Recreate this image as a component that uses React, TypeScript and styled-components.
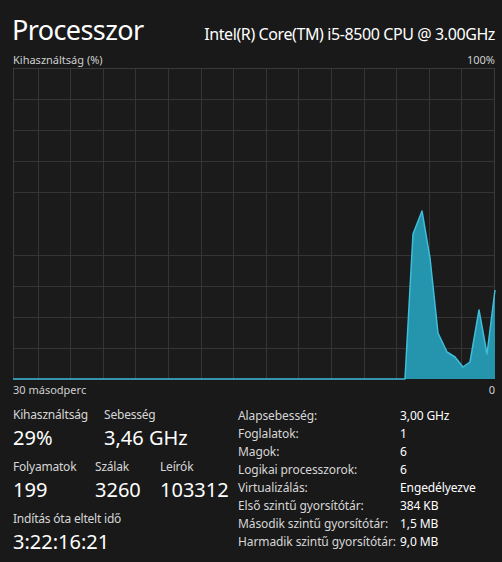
import React from 'react';
import styled, { createGlobalStyle } from 'styled-components';

const GlobalStyle = createGlobalStyle`
  html, body {
    margin: 0;
    padding: 0;
    background: #191919;
  }
  body {
    font-family: 'Noto Sans', 'Open Sans', sans-serif;
    color: #ffffff;
  }
`;

const Page = styled.div`
  width: 502px;
  height: 562px;
  box-sizing: border-box;
  padding: 0 7px 0 13px;
  background: #191919;
  overflow: hidden;
`;

const Header = styled.div`
  display: flex;
  justify-content: space-between;
  align-items: baseline;
  height: 47px;
  padding-top: 14px;
  box-sizing: border-box;
`;

const Title = styled.h1`
  margin: 0 0 0 -1px;
  font-size: 27px;
  font-weight: 400;
  letter-spacing: -0.6px;
  line-height: 32px;
  color: #ffffff;
`;

const CpuName = styled.div`
  font-size: 16px;
  letter-spacing: -0.4px;
  color: #ffffff;
`;

const AxisRow = styled.div<{ $top: number }>`
  display: flex;
  justify-content: space-between;
  box-sizing: border-box;
  padding-top: ${({ $top }) => $top}px;
  font-size: 11px;
  line-height: 14px;
  height: 21px;
  color: #cfcfcf;
`;

const Graph = styled.div`
  position: relative;
  height: 311px;
  box-sizing: border-box;
  border: 1px solid #3a3a3a;
  border-bottom: none;
  background-color: #1b1b1b;
  background-image:
    repeating-linear-gradient(
      to bottom,
      transparent 0,
      transparent 30.1px,
      #353535 30.1px,
      #353535 31.1px
    ),
    repeating-linear-gradient(
      to right,
      transparent 0,
      transparent 31.6px,
      #353535 31.6px,
      #353535 32.6px
    );
  background-position: 0 0, -8px 0;
`;

const Chart = styled.svg`
  position: absolute;
  left: -1px;
  top: -1px;
  width: 482px;
  height: 312px;
  overflow: visible;
`;

const StatsArea = styled.div`
  display: flex;
  padding-top: 7px;
`;

const LeftStats = styled.div`
  display: flex;
  flex-direction: column;
  width: 225px;
`;

const StatRow = styled.div`
  display: flex;
  margin-bottom: 6px;
`;

const StatBlock = styled.div<{ $w?: number }>`
  display: flex;
  flex-direction: column;
  min-width: ${({ $w }) => ($w ? `${$w}px` : 'auto')};
`;

const StatLabel = styled.div`
  font-size: 12px;
  line-height: 16px;
  color: #d6d6d6;
  letter-spacing: -0.2px;
`;

const StatValue = styled.div`
  font-size: 20px;
  line-height: 30px;
  color: #ffffff;
`;

const InfoTable = styled.div`
  display: grid;
  grid-template-columns: 162px auto;
  grid-auto-rows: 17.9px;
  align-items: center;
  font-size: 12px;
  letter-spacing: -0.1px;
  margin-top: 0;
`;

const InfoKey = styled.div`
  color: #d6d6d6;
`;

const InfoVal = styled.div`
  color: #ffffff;
`;

const points: [number, number][] = [
  [405, 379],
  [413, 234],
  [422, 211],
  [430, 258],
  [438, 333],
  [447, 352],
  [455, 357],
  [463, 367],
  [470, 362],
  [479, 310],
  [487, 354],
  [495, 290],
];

const info = [
  ['Alapsebesség:', '3,00 GHz'],
  ['Foglalatok:', '1'],
  ['Magok:', '6'],
  ['Logikai processzorok:', '6'],
  ['Virtualizálás:', 'Engedélyezve'],
  ['Első szintű gyorsítótár:', '384 KB'],
  ['Második szintű gyorsítótár:', '1,5 MB'],
  ['Harmadik szintű gyorsítótár:', '9,0 MB'],
];

export default function App() {
  // chart coords are given in page pixels; shift to the graph's origin
  const ox = 13;
  const oy = 68;
  const pts = points.map(([x, y]) => `${x - ox},${y - oy}`);
  const line = [`0,${379 - oy}`, ...pts].join(' ');
  const area = [...pts, `${495 - ox},${379 - oy}`].join(' ');

  return (
    <Page>
      <GlobalStyle />
      <Header>
        <Title>Processzor</Title>
        <CpuName>Intel(R) Core(TM) i5-8500 CPU @ 3.00GHz</CpuName>
      </Header>
      <AxisRow $top={6}>
        <span>Kihasználtság (%)</span>
        <span>100%</span>
      </AxisRow>
      <Graph>
        <Chart viewBox="0 0 482 312">
          <polygon points={area} fill="#2594ad" />
          <polyline
            points={line}
            fill="none"
            stroke="#3fbdd9"
            strokeWidth="1.5"
            strokeLinejoin="round"
          />
        </Chart>
      </Graph>
      <AxisRow $top={4}>
        <span>30 másodperc</span>
        <span>0</span>
      </AxisRow>
      <StatsArea>
        <LeftStats>
          <StatRow>
            <StatBlock $w={91}>
              <StatLabel>Kihasználtság</StatLabel>
              <StatValue>29%</StatValue>
            </StatBlock>
            <StatBlock>
              <StatLabel>Sebesség</StatLabel>
              <StatValue>3,46 GHz</StatValue>
            </StatBlock>
          </StatRow>
          <StatRow>
            <StatBlock $w={82}>
              <StatLabel>Folyamatok</StatLabel>
              <StatValue>199</StatValue>
            </StatBlock>
            <StatBlock $w={65}>
              <StatLabel>Szálak</StatLabel>
              <StatValue>3260</StatValue>
            </StatBlock>
            <StatBlock>
              <StatLabel>Leírók</StatLabel>
              <StatValue>103312</StatValue>
            </StatBlock>
          </StatRow>
          <StatRow>
            <StatBlock>
              <StatLabel>Indítás óta eltelt idő</StatLabel>
              <StatValue>3:22:16:21</StatValue>
            </StatBlock>
          </StatRow>
        </LeftStats>
        <InfoTable>
          {info.map(([k, v]) => (
            <React.Fragment key={k}>
              <InfoKey>{k}</InfoKey>
              <InfoVal>{v}</InfoVal>
            </React.Fragment>
          ))}
        </InfoTable>
      </StatsArea>
    </Page>
  );
}
